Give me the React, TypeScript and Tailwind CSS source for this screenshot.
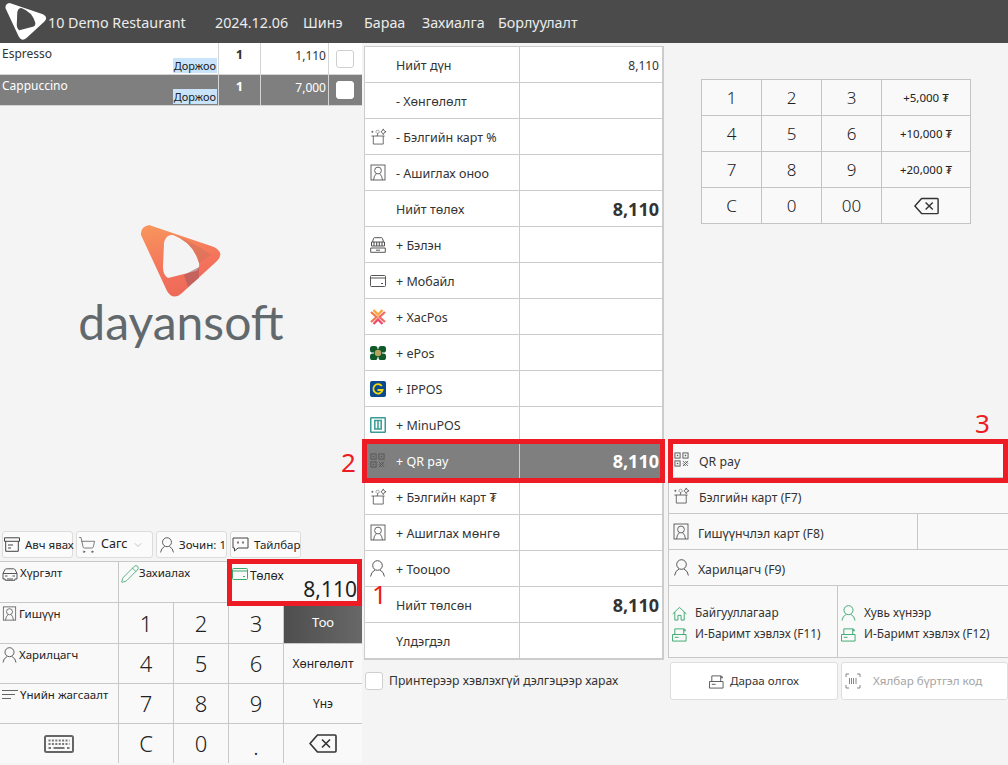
import { ReactNode } from 'react';
import { ChevronDown, Pencil, ShoppingCart } from 'lucide-react';

const LOGO_PATH =
  'M0 10 Q-1 2 8 0 L73 22 Q84 28 76 36 L41 68 Q32 76 26 66 Z M23 18 Q25 9 32 10 Q52 17 58 38 Q59 44 55 46 L27 53 Q22 50 22 42 Z';

function LogoMark({ className, fill }: { className: string; fill: string }) {
  return (
    <svg viewBox="-1 0 82 74" className={className}>
      <path d={LOGO_PATH} fill={fill} fillRule="evenodd" />
    </svg>
  );
}

function BigLogo() {
  return (
    <div className="flex flex-col items-center">
      <svg viewBox="-1 0 82 74" className="w-[82px] h-[74px]">
        <defs>
          <linearGradient id="dayan" x1="0" y1="0" x2="0.3" y2="1">
            <stop offset="0%" stopColor="#f8975c" />
            <stop offset="65%" stopColor="#f4745c" />
            <stop offset="100%" stopColor="#ee6a58" />
          </linearGradient>
        </defs>
        <path d={LOGO_PATH} fill="url(#dayan)" fillRule="evenodd" />
        <path d="M32 10 Q52 17 58 38 L70 30 Q55 18 32 10 Z" fill="#c9705c" opacity="0.45" />
        <path d="M58 42 L58 53 L47 62 L43 50 Z" fill="#a85a5f" opacity="0.6" />
      </svg>
      <div className="font-['Lato',sans-serif] text-[48px] leading-[44px] text-[#62696d] mt-[1px]">dayansoft</div>
    </div>
  );
}

function Portrait({ className = 'w-[16px] h-[17px]' }: { className?: string }) {
  return (
    <svg viewBox="0 0 16 17" fill="none" stroke="#555" strokeWidth="0.9" className={className}>
      <rect x="1" y="1" width="14" height="15" />
      <circle cx="8" cy="6.5" r="3.4" />
      <path d="M3.5 16 Q4 11.5 6.3 9.8 M12.5 16 Q12 11.5 9.7 9.8" />
    </svg>
  );
}

function PersonIcon({ stroke = '#555', className = 'w-[15px] h-[17px]' }: { stroke?: string; className?: string }) {
  return (
    <svg viewBox="0 0 15 17" fill="none" stroke={stroke} strokeWidth="1" className={className}>
      <circle cx="7.5" cy="5.5" r="4.8" />
      <path d="M0.6 16.5 Q1 12 5 10 M14.4 16.5 Q14 12 10 10" />
    </svg>
  );
}

function CardIcon({ stroke = '#555', className = 'w-[16px] h-[12px]' }: { stroke?: string; className?: string }) {
  return (
    <svg viewBox="0 0 16 12" fill="none" stroke={stroke} strokeWidth="1" className={className}>
      <rect x="0.5" y="0.5" width="15" height="11" rx="1" />
      <path d="M0.5 3 H15.5 M11 8.5 H13" />
    </svg>
  );
}

function GiftIcon() {
  return (
    <svg viewBox="0 0 18 18" fill="none" stroke="#555" strokeWidth="0.9" className="w-[17px] h-[17px]">
      <path d="M1.5 8.5 H15.5 M3.5 8.5 V17 H14 V8.5" />
      <circle cx="8" cy="4" r="1.7" strokeDasharray="1.2 0.8" />
      <path d="M8.5 5.5 L7.5 8.5" />
      <path d="M14 1 L15 3 L17 4 L15 5 L14 7 L13 5 L11.5 4 L13 3 Z" />
      <path d="M2.5 3 V5 M1.5 4 H3.5" />
    </svg>
  );
}

function QrIcon({ stroke = '#555' }: { stroke?: string }) {
  return (
    <svg viewBox="0 0 16 16" fill="none" stroke={stroke} strokeWidth="1" className="w-[15px] h-[15px]">
      <rect x="1" y="1" width="5.5" height="5.5" />
      <rect x="9.5" y="1" width="5.5" height="5.5" />
      <rect x="1" y="9.5" width="5.5" height="5.5" />
      <rect x="3" y="3" width="1.5" height="1.5" fill={stroke} stroke="none" />
      <rect x="11.5" y="3" width="1.5" height="1.5" fill={stroke} stroke="none" />
      <rect x="3" y="11.5" width="1.5" height="1.5" fill={stroke} stroke="none" />
      <path d="M9.5 9.5 L15 15 M15 9.5 L9.5 15 M12 9.5 L15 12.5 M9.5 12 L12.5 15" strokeWidth="0.9" />
    </svg>
  );
}

function CashIcon() {
  return (
    <svg viewBox="0 0 16 16" fill="none" stroke="#555" strokeWidth="1" className="w-[16px] h-[16px]">
      <path d="M2.5 5 L3.5 1.5 Q3.7 0.7 4.5 0.7 H11.5 Q12.3 0.7 12.5 1.5 L13.5 5" />
      <path d="M1.5 5 H14.5 V9 H1.5 Z" />
      <path d="M4 5 V9 M6.7 5 V9 M9.3 5 V9 M12 5 V9" strokeWidth="1.1" />
      <path d="M0.7 11 H15.3 V15.3 H0.7 Z M6 13.2 H10" />
    </svg>
  );
}

function XacIcon() {
  return (
    <svg viewBox="0 0 16 16" fill="none" strokeWidth="2.3" className="w-[16px] h-[16px]">
      <path d="M1 3 L6.5 8 L1 13" stroke="#f4794a" />
      <path d="M15 3 L9.5 8 L15 13" stroke="#f06a5f" />
      <path d="M3.5 1 L8 5.5 L12.5 1" stroke="#f9a53c" />
      <path d="M3.5 15 L8 10.5 L12.5 15" stroke="#ee4a6e" />
    </svg>
  );
}

function EposIcon() {
  return (
    <svg viewBox="0 0 16 16" className="w-[16px] h-[16px]">
      <rect x="0" y="1" width="7.5" height="6.5" rx="2.6" fill="#0f5a28" />
      <rect x="8.5" y="1" width="7.5" height="6.5" rx="2.6" fill="#0f5a28" />
      <rect x="0" y="8.5" width="7.5" height="6.5" rx="2.6" fill="#0f5a28" />
      <rect x="8.5" y="8.5" width="7.5" height="6.5" rx="2.6" fill="#0f5a28" />
      <rect x="4" y="4" width="8" height="8" fill="#0f5a28" />
      <circle cx="8" cy="8" r="3.2" fill="#b9a15e" />
    </svg>
  );
}

function IpposIcon() {
  return (
    <svg viewBox="0 0 16 16" className="w-[16px] h-[16px]">
      <rect width="16" height="16" rx="2" fill="#0b4a8c" />
      <path d="M11.8 5 A4.7 4.7 0 1 0 12.6 9 H7.5" fill="none" stroke="#f5d90a" strokeWidth="1.8" />
    </svg>
  );
}

function MinuIcon() {
  return (
    <svg viewBox="0 0 16 16" fill="none" stroke="#3a9a94" className="w-[16px] h-[16px]">
      <rect x="0.75" y="0.75" width="14.5" height="14.5" rx="0.5" strokeWidth="1.5" />
      <path d="M4.8 3.5 V12 H11.2 V3.5 Z M8 3.5 V12" strokeWidth="1.5" />
    </svg>
  );
}

function PrinterIcon({ stroke = '#3aa76d' }: { stroke?: string }) {
  return (
    <svg viewBox="0 0 16 16" fill="none" stroke={stroke} strokeWidth="1" className="w-[15px] h-[15px]">
      <path d="M0.5 8 H15 V15 H0.5 Z M3 11 H7" />
      <path d="M3 8 V2 H12 Q14.5 2 14.5 4 H12.5 M12.5 2 V8" />
    </svg>
  );
}

function HomeIcon() {
  return (
    <svg viewBox="0 0 16 15" fill="none" stroke="#3aa76d" strokeWidth="1" className="w-[15px] h-[15px]">
      <path d="M0.7 8 L8 1 L15.3 8 M3 6 V14.5 H6.3 V9.5 H9.7 V14.5 H13 V6" />
    </svg>
  );
}

function BarcodeIcon() {
  return (
    <svg viewBox="0 0 16 16" fill="none" stroke="#777" strokeWidth="0.9" className="w-[16px] h-[16px]">
      <path d="M1 4 V1 H4 M12 1 H15 V4 M15 12 V15 H12 M4 15 H1 V12 M4.5 5 V11 M6.5 5 V11 M8.5 5 V11 M11 5 V11" />
    </svg>
  );
}

function ArchiveIcon() {
  return (
    <svg viewBox="0 0 16 15" fill="none" stroke="#444" strokeWidth="1" className="w-[16px] h-[15px] shrink-0">
      <path d="M0.5 0.8 H15.5 V4.3 H0.5 Z M1.7 4.3 V14.3 H14.3 V4.3 M4 8 H9 M4 11 H7" />
    </svg>
  );
}

function CarIcon() {
  return (
    <svg viewBox="0 0 16 13" fill="none" stroke="#555" strokeWidth="1" className="w-[16px] h-[13px] mt-[3px] shrink-0">
      <path d="M1 5.5 L2.8 1.8 Q3.3 0.8 4.5 0.8 H11.5 Q12.7 0.8 13.2 1.8 L15 5.5 V11 H12.8 V12.3 H3.2 V11 H1 Z" />
      <path d="M1 5.5 H15 M3 8 H5.5 M10.5 8 H13 M5 11 H11" />
    </svg>
  );
}

function CommentIcon() {
  return (
    <svg viewBox="0 0 17 15" fill="none" stroke="#444" strokeWidth="1" className="w-[17px] h-[15px] shrink-0">
      <path d="M1 1 H16 V11 H6 L2.5 14 V11 H1 Z" />
      <path d="M6 4.5 V6.5 M11 4.5 V6.5" strokeWidth="1.4" />
    </svg>
  );
}

function ListIcon() {
  return (
    <svg viewBox="0 0 16 12" stroke="#555" strokeWidth="0.9" className="w-[16px] h-[12px] mt-[2px] shrink-0">
      <path d="M0 1.5 H16 M0 5.5 H13 M0 9.5 H9" />
    </svg>
  );
}

function KeyboardIcon() {
  return (
    <svg viewBox="0 0 30 18" fill="none" className="w-[30px] h-[18px]">
      <rect x="1" y="1" width="28" height="16" rx="1.5" stroke="#666" strokeWidth="2" />
      <path d="M4.5 5.5 H25.5 M4.5 9 H25.5" stroke="#777" strokeWidth="2" strokeDasharray="2 1.4" />
      <path d="M4.5 13 H7 M9.5 13 H20.5 M23 13 H25.5" stroke="#777" strokeWidth="2" />
    </svg>
  );
}

function BackspaceIcon({ className }: { className: string }) {
  return (
    <svg viewBox="0 0 28 19" fill="none" stroke="#333" strokeWidth="1.6" className={className}>
      <path d="M8.5 1 H26 Q27 1 27 2 V17 Q27 18 26 18 H8.5 L1 9.5 Z" strokeLinejoin="round" />
      <path d="M13 5.5 L21 13.5 M21 5.5 L13 13.5" />
    </svg>
  );
}

function TopButton({ children, width }: { children: ReactNode; width: string }) {
  return (
    <div className={`${width} h-[27px] flex items-center gap-[5px] px-[1px] bg-[#fbfbfb] border border-[#dcdcdc] rounded-[3px] text-[11.5px] text-[#222]`}>
      {children}
    </div>
  );
}

function SideCell({ icon, label, className = '' }: { icon: ReactNode; label: string; className?: string }) {
  return (
    <div className={`bg-[#f9f9f9] flex items-start gap-[2px] pt-[3px] pl-[2px] text-[11.5px] leading-[16px] text-[#222] ${className}`}>
      {icon}
      <span>{label}</span>
    </div>
  );
}

function KeyCell({ children, className = '' }: { children: ReactNode; className?: string }) {
  return <div className={`bg-[#f9f9f9] flex items-center justify-center text-[#222] ${className}`}>{children}</div>;
}

function BigKey({ children }: { children: ReactNode }) {
  return <KeyCell className="text-[22px] font-light">{children}</KeyCell>;
}

const payRows: { icon?: ReactNode; label: string; value?: string; bold?: boolean; active?: boolean }[] = [
  { label: 'Нийт дүн', value: '8,110' },
  { label: '- Хөнгөлөлт' },
  { icon: <GiftIcon />, label: '- Бэлгийн карт %' },
  { icon: <Portrait />, label: '- Ашиглах оноо' },
  { label: 'Нийт төлөх', value: '8,110', bold: true },
  { icon: <CashIcon />, label: '+ Бэлэн' },
  { icon: <CardIcon />, label: '+ Мобайл' },
  { icon: <XacIcon />, label: '+ XacPos' },
  { icon: <EposIcon />, label: '+ ePos' },
  { icon: <IpposIcon />, label: '+ IPPOS' },
  { icon: <MinuIcon />, label: '+ MinuPOS' },
  { icon: <QrIcon />, label: '+ QR pay', value: '8,110', bold: true, active: true },
  { icon: <GiftIcon />, label: '+ Бэлгийн карт ₮' },
  { icon: <Portrait />, label: '+ Ашиглах мөнгө' },
  { icon: <PersonIcon />, label: '+ Тооцоо' },
  { label: 'Нийт төлсөн', value: '8,110', bold: true },
  { label: 'Үлдэгдэл' },
];

const numKeys = ['1', '2', '3', '+5,000 ₮', '4', '5', '6', '+10,000 ₮', '7', '8', '9', '+20,000 ₮', 'C', '0', '00'];

function OrderRow({ name, total, height, active }: { name: string; total: string; height: string; active?: boolean }) {
  return (
    <div className={`${height} flex border-b border-[#d4d4d4] text-[12px] ${active ? 'bg-[#7f7f7f] text-white' : 'bg-white text-[#333]'}`}>
      <div className="w-[218px] relative pl-[2px] pt-[1px] leading-[20px]">
        {name}
        <span className="absolute right-[1px] bottom-[1px] h-[15px] px-[1px] bg-[#c9e4fa] text-[11px] leading-[15px] text-[#222]">Доржоо</span>
      </div>
      <div className="w-[42px] border-l border-[#d4d4d4] text-center font-bold text-[13px] leading-[23px]">1</div>
      <div className="w-[68px] border-l border-[#d4d4d4] text-right pr-[2px] leading-[26px]">{total}</div>
      <div className="flex-1 border-l border-[#d4d4d4] flex items-center justify-center pr-[2px]">
        <div className={`w-[18px] h-[18px] rounded-[3px] border ${active ? 'bg-white border-white' : 'bg-white border-[#cfcfcf]'}`} />
      </div>
    </div>
  );
}

export default function App() {
  return (
    <div className="relative w-[1008px] h-[765px] overflow-hidden bg-[#f4f4f4] font-['Noto_Sans',sans-serif]">
      {/* Header */}
      <header className="h-[43px] bg-[#4b4b4b] flex items-center text-[14.3px] text-[#ececec]">
        <LogoMark className="w-[42px] h-[38px] ml-[5px] mt-[1px]" fill="#ffffff" />
        <span className="ml-[1px] w-[167px] pt-[2px]">10 Demo Restaurant</span>
        <span className="w-[88px] pt-[2px]">2024.12.06</span>
        <span className="w-[61px] pt-[2px]">Шинэ</span>
        <span className="w-[58px] pt-[2px]">Бараа</span>
        <span className="w-[76px] pt-[2px]">Захиалга</span>
        <span className="pt-[2px]">Борлуулалт</span>
      </header>

      <div className="flex h-[722px]">
        {/* Left column */}
        <div className="w-[362px] flex flex-col">
          <OrderRow name="Espresso" total="1,110" height="h-[32px]" />
          <OrderRow name="Cappuccino" total="7,000" height="h-[31px]" active />
          <div className="h-[425px] flex items-start justify-center pt-[119px] bg-[#f4f4f4]">
            <BigLogo />
          </div>
          <div className="flex gap-[3px] pl-[2px] h-[30px]">
            <TopButton width="w-[71px]">
              <ArchiveIcon />
              <span className="whitespace-nowrap pt-[1px]">Авч явах</span>
            </TopButton>
            <TopButton width="w-[77px]">
              <ShoppingCart className="w-[18px] h-[18px] shrink-0 text-[#555]" strokeWidth={1} />
              <span className="text-[12.5px]">Сагс</span>
              <ChevronDown className="w-[12px] h-[12px] text-[#888]" strokeWidth={1} />
            </TopButton>
            <TopButton width="w-[71px]">
              <span className="pl-[2px]">
                <PersonIcon className="w-[14px] h-[16px]" />
              </span>
              <span className="whitespace-nowrap pt-[1px]">Зочин: 1</span>
            </TopButton>
            <TopButton width="w-[71px]">
              <CommentIcon />
              <span className="pt-[1px]">Тайлбар</span>
            </TopButton>
          </div>
          <div className="grid grid-cols-[118px_54px_54px_54px_1fr] grid-rows-[40px_40px_39px_39px_39px] gap-px h-[202px] bg-[#c8c8c8] border-y border-[#c8c8c8]">
            <SideCell icon={<CarIcon />} label="Хүргэлт" />
            <SideCell
              className="col-span-2"
              icon={<Pencil className="w-[20px] h-[20px] -ml-[1px] -mt-[1px] -mr-[3px] shrink-0 text-[#3aa76d]" strokeWidth={1} />}
              label="Захиалах"
            />
            <div className="col-span-2 bg-[#f9f9f9] relative pl-[3px] pt-[5px] flex items-start gap-[2px] text-[12px] leading-[16px] text-[#222]">
              <CardIcon stroke="#3aa76d" className="w-[16px] h-[12px] mt-[1px]" />
              <span className="pt-[1px]">Төлөх</span>
              <span className="absolute right-[5px] bottom-[-1px] text-[21px] leading-[28px]">8,110</span>
            </div>
            <SideCell icon={<Portrait className="w-[15px] h-[15px]" />} label="Гишүүн" />
            <BigKey>1</BigKey>
            <BigKey>2</BigKey>
            <BigKey>3</BigKey>
            <KeyCell className="bg-gradient-to-r from-[#4e4e4e] to-[#686868] text-[13px] text-white">Тоо</KeyCell>
            <SideCell icon={<PersonIcon className="w-[15px] h-[16px]" />} label="Харилцагч" />
            <BigKey>4</BigKey>
            <BigKey>5</BigKey>
            <BigKey>6</BigKey>
            <KeyCell className="text-[12px]">Хөнгөлөлт</KeyCell>
            <SideCell icon={<ListIcon />} label="Үнийн жагсаалт" />
            <BigKey>7</BigKey>
            <BigKey>8</BigKey>
            <BigKey>9</BigKey>
            <KeyCell className="text-[12px]">Үнэ</KeyCell>
            <KeyCell>
              <KeyboardIcon />
            </KeyCell>
            <BigKey>C</BigKey>
            <BigKey>0</BigKey>
            <KeyCell className="text-[22px] font-light pt-[6px]">.</KeyCell>
            <KeyCell>
              <BackspaceIcon className="w-[28px] h-[19px]" />
            </KeyCell>
          </div>
        </div>

        {/* Payment table */}
        <div className="w-[306px] pl-[2px] pt-[3px]">
          <div className="w-[300px] border-l border-r-2 border-t border-b-2 border-[#cccccc] bg-white">
            {payRows.map((row, i) => (
              <div
                key={row.label}
                className={`flex text-[12.5px] ${i > 0 ? 'h-[36px] border-t border-[#cccccc]' : 'h-[35px]'} ${row.active ? 'bg-[#7f7f7f] text-white' : 'text-[#333]'}`}
              >
                <div className="w-[155px] flex items-center border-r border-[#cccccc]">
                  <div className="w-[31px] shrink-0 flex items-center pl-[5px]">{row.icon}</div>
                  <span className="whitespace-nowrap pt-[4px]">{row.label}</span>
                </div>
                <div className={`flex-1 flex items-center justify-end pr-[3px] pt-[2px] ${row.bold ? 'text-[18px] font-bold' : 'text-[12px]'}`}>{row.value}</div>
              </div>
            ))}
          </div>
          <div className="flex items-center gap-[6px] mt-[12px] pl-[1px] text-[12.2px] text-[#333]">
            <div className="w-[18px] h-[18px] rounded-[3px] bg-white border border-[#cfcfcf]" />
            <span>Принтерээр хэвлэхгүй дэлгэцээр харах</span>
          </div>
        </div>

        {/* Right column */}
        <div className="flex-1 flex flex-col">
          <div className="h-[399px] pt-[36px] pl-[33px]">
            <div className="w-[270px] grid grid-cols-[59px_59px_59px_1fr] grid-rows-[35px_35px_35px_35px] gap-px bg-[#c4c4c4] border border-[#c4c4c4]">
              {numKeys.map((k) => (
                <KeyCell key={k} className={k.startsWith('+') ? 'text-[11.5px]' : 'text-[17px] font-light'}>
                  {k}
                </KeyCell>
              ))}
              <KeyCell>
                <BackspaceIcon className="w-[25px] h-[18px]" />
              </KeyCell>
            </div>
          </div>
          <div className="border-l border-[#c8c8c8] text-[12.3px] text-[#333] bg-[#f9f9f9]">
            <div className="h-[36px] flex items-center gap-[10px] pl-[5px] border-b border-[#c8c8c8]">
              <QrIcon />
              <span className="pt-[6px]">QR pay</span>
            </div>
            <div className="h-[36px] flex items-center gap-[9px] pl-[4px] border-b border-[#c8c8c8]">
              <GiftIcon />
              <span className="pt-[6px]">Бэлгийн карт (F7)</span>
            </div>
            <div className="h-[36px] flex border-b border-[#c8c8c8]">
              <div className="w-[249px] flex items-center gap-[9px] pl-[4px] border-r border-[#c8c8c8]">
                <Portrait />
                <span className="pt-[6px]">Гишүүнчлэл карт (F8)</span>
              </div>
            </div>
            <div className="h-[36px] flex items-center gap-[9px] pl-[5px] border-b border-[#c8c8c8]">
              <PersonIcon />
              <span className="pt-[6px]">Харилцагч (F9)</span>
            </div>
            <div className="h-[72px] flex border-b border-[#c8c8c8] text-[11.8px]">
              {[
                { icon: <HomeIcon />, label: 'Байгууллагаар', print: 'И-Баримт хэвлэх (F11)', w: 'w-[169px] border-r border-[#c8c8c8]' },
                { icon: <PersonIcon stroke="#3aa76d" className="w-[15px] h-[16px]" />, label: 'Хувь хүнээр', print: 'И-Баримт хэвлэх (F12)', w: 'flex-1' },
              ].map((c) => (
                <div key={c.label} className={`${c.w} pl-[3px] pt-[18px] flex flex-col gap-[3px]`}>
                  <div className="flex items-center gap-[8px] h-[18px]">
                    {c.icon}
                    <span>{c.label}</span>
                  </div>
                  <div className="flex items-center gap-[8px] h-[18px]">
                    <PrinterIcon />
                    <span>{c.print}</span>
                  </div>
                </div>
              ))}
            </div>
          </div>
          <div className="flex gap-[3px] pl-[2px] pt-[4px] text-[11.6px]">
            <div className="w-[168px] h-[38px] flex items-center justify-center gap-[6px] bg-white border border-[#dedede] rounded-[3px] text-[#333]">
              <PrinterIcon stroke="#555" />
              <span>Дараа олгох</span>
            </div>
            <div className="w-[167px] h-[38px] flex items-center gap-[12px] pl-[3px] bg-white border border-[#dedede] rounded-[3px] text-[#a5a5a5]">
              <BarcodeIcon />
              <span>Хялбар бүртгэл код</span>
            </div>
          </div>
        </div>
      </div>

      {/* Red annotations */}
      <div className="absolute left-[227px] top-[559px] w-[135px] h-[47px] border-[5px] border-[#ed1c24]" />
      <div className="absolute left-[362px] top-[439px] w-[303px] h-[44px] border-[5px] border-[#ed1c24]" />
      <div className="absolute left-[668px] top-[439px] w-[340px] h-[44px] border-[5px] border-[#ed1c24]" />
      <span className="absolute left-[372px] top-[576px] text-[26px] leading-[36px] text-[#ed1c24]">1</span>
      <span className="absolute left-[341px] top-[444px] text-[26px] leading-[36px] text-[#ed1c24]">2</span>
      <span className="absolute left-[975px] top-[405px] text-[26px] leading-[36px] text-[#ed1c24]">3</span>
    </div>
  );
}
